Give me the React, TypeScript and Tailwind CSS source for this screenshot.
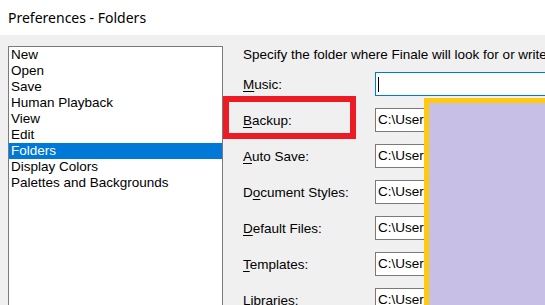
import React from "react";

const items = [
  "New",
  "Open",
  "Save",
  "Human Playback",
  "View",
  "Edit",
  "Folders",
  "Display Colors",
  "Palettes and Backgrounds",
];

const rows: { pre: string; key: string; post: string; value: string; focus?: boolean }[] = [
  { pre: "", key: "M", post: "usic:", value: "", focus: true },
  { pre: "", key: "B", post: "ackup:", value: "C:\\Users\\user\\Documents\\Finale\\Backup" },
  { pre: "", key: "A", post: "uto Save:", value: "C:\\Users\\user\\Documents\\Finale\\AutoSave" },
  { pre: "D", key: "o", post: "cument Styles:", value: "C:\\Users\\user\\Documents\\Finale\\Styles" },
  { pre: "", key: "D", post: "efault Files:", value: "C:\\Users\\user\\Documents\\Finale\\Default" },
  { pre: "", key: "T", post: "emplates:", value: "C:\\Users\\user\\Documents\\Finale\\Templates" },
  { pre: "", key: "L", post: "ibraries:", value: "C:\\Users\\user\\Documents\\Finale\\Libraries" },
];

export default function App() {
  return (
    <div
      className="relative w-[545px] h-[305px] overflow-hidden bg-[#f0f0f0] text-black"
      style={{ fontFamily: '"Liberation Sans", Arial, sans-serif' }}
    >
      <div
        className="h-[35px] bg-white flex items-center pl-2 text-[14px] text-black"
        style={{ fontFamily: '"Noto Sans", "Open Sans", sans-serif' }}
      >
        Preferences - Folders
      </div>
      <div className="flex pl-2 pt-[11px]">
        <div className="w-[215px] h-[300px] shrink-0 border border-[#7a7a7a] bg-white pt-0 text-[13.5px] leading-[16px]">
          {items.map((it) => (
            <div
              key={it}
              className={
                it === "Folders"
                  ? "h-4 pl-[2px] bg-[#0078d7] text-white whitespace-nowrap"
                  : "h-4 pl-[2px] whitespace-nowrap"
              }
            >
              {it}
            </div>
          ))}
        </div>
        <div className="flex-1 pl-[20px] pt-[1px] text-[13.5px] min-w-0">
          <div className="h-[16px] leading-[16px] whitespace-nowrap">
            Specify the folder where Finale will look for or write to the following files:
          </div>
          <div className="flex flex-col gap-[12px] pt-[9px]">
            {rows.map((r, i) => (
              <div key={i} className="flex items-center h-[24px]">
                <div className="w-[132px] shrink-0 whitespace-nowrap pt-[2px]">
                  {r.pre}
                  <span className="underline underline-offset-[2px]">{r.key}</span>
                  {r.post}
                </div>
                <div
                  className={
                    r.focus
                      ? "h-[24px] w-[300px] shrink-0 border border-[#0078d7] bg-white flex items-center pl-[2px] whitespace-nowrap overflow-hidden"
                      : "h-[24px] w-[300px] shrink-0 border border-[#7a7a7a] bg-white flex items-center pl-[2px] whitespace-nowrap overflow-hidden"
                  }
                >
                  {r.focus ? <span className="inline-block w-px h-[15px] bg-black" /> : r.value}
                </div>
              </div>
            ))}
          </div>
        </div>
      </div>
      <div className="absolute left-[223px] top-[96px] w-[133px] h-[43px] border-[6px] border-[#ed1c24]" />
      <div className="absolute left-[424px] top-[98px] w-[140px] h-[220px] border-[5px] border-[#ffc90e] bg-[#c8bfe7]" />
    </div>
  );
}
